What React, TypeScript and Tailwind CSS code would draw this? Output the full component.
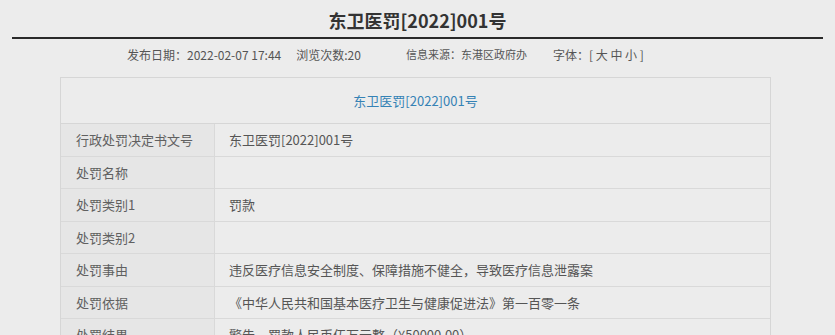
import React from "react";

const rows: [string, string][] = [
  ["行政处罚决定书文号", "东卫医罚[2022]001号"],
  ["处罚名称", ""],
  ["处罚类别1", "罚款"],
  ["处罚类别2", ""],
  ["处罚事由", "违反医疗信息安全制度、保障措施不健全，导致医疗信息泄露案"],
  ["处罚依据", "《中华人民共和国基本医疗卫生与健康促进法》第一百零一条"],
  ["处罚结果", "警告，罚款人民币伍万元整（¥50000.00）"],
];

export default function App() {
  return (
    <div
      className="w-[835px] h-[335px] overflow-hidden bg-[#ececec] text-[#555]"
      style={{ fontFamily: '"Noto Sans CJK SC", "Noto Sans", sans-serif' }}
    >
      <h1 className="h-[37px] flex items-center justify-center pt-[2px] text-[18px] font-bold text-[#333] leading-none">
        东卫医罚[2022]001号
      </h1>
      <div className="mx-[12px] h-[2px] bg-[#2a2a2a]" />
      <div className="h-[31px] flex items-center text-[12px] leading-none text-[#555]">
        <span className="ml-[127px]">发布日期：2022-02-07 17:44</span>
        <span className="ml-[15px]">浏览次数:20</span>
        <span className="ml-[45px] text-[11px]">信息来源：东港区政府办</span>
        <span className="ml-[26px]">字体：[ 大 中 小 ]</span>
      </div>
      <div className="ml-[60px] mt-[7px] w-[711px] border border-[#d6d6d6] text-[13px] leading-none">
        <div className="h-[46px] flex items-center justify-center text-[#3582b5] border-b border-[#d6d6d6]">
          东卫医罚[2022]001号
        </div>
        {rows.map(([label, value]) => (
          <div key={label} className="flex h-[32.5px] border-b border-[#d9d9d9]">
            <div className="w-[154px] shrink-0 flex items-center pl-[15px] bg-[#e6e6e6] text-[#606060] border-r border-[#d9d9d9]">
              {label}
            </div>
            <div className="flex-1 flex items-center pl-[14px]">{value}</div>
          </div>
        ))}
      </div>
    </div>
  );
}
